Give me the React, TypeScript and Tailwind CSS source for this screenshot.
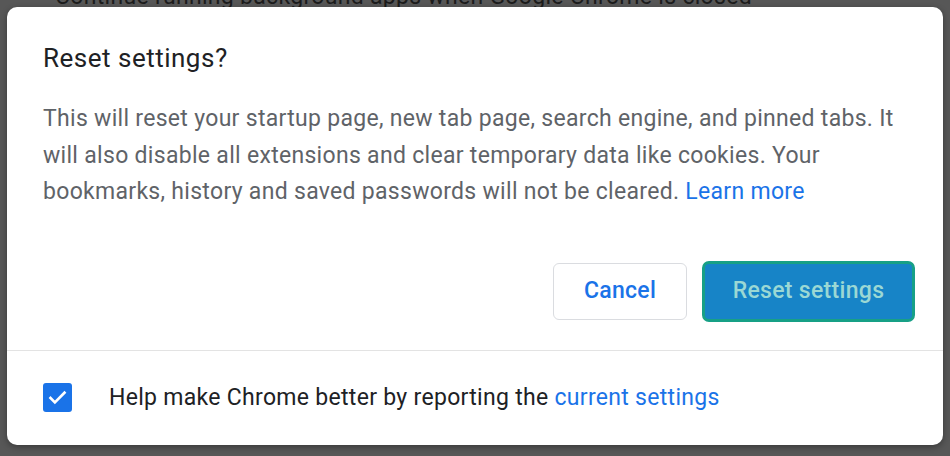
import React from "react";

export default function App() {
  return (
    <div
      className="relative h-[456px] w-[950px] overflow-hidden bg-[#575757] pl-[7px] pt-[7px]"
      style={{ fontFamily: "Roboto, 'Liberation Sans', sans-serif" }}
    >
      <div className="absolute left-[55px] top-[-16px] whitespace-nowrap text-[23px] leading-[26px] tracking-[0.3px] text-[#1c1c1c]">
        Continue running background apps when Google Chrome is closed
      </div>
      <div className="relative flex h-[438px] w-[936px] flex-col rounded-[10px] bg-white shadow-[0_2px_6px_rgba(0,0,0,0.35)]">
        <div className="px-[36px] pt-[35px]">
          <h1 className="text-[26px] leading-[32px] tracking-[0.5px] text-[#202124]">Reset settings?</h1>
          <p className="mt-[27px] w-[866px] text-[23px] leading-[36.5px] tracking-[0.3px] text-[#5f6368]">
            This will reset your startup page, new tab page, search engine, and pinned tabs. It will also
            disable all extensions and clear temporary data like cookies. Your bookmarks, history and saved
            passwords will not be cleared. <span className="text-[#1a73e8]">Learn more</span>
          </p>
        </div>
        <div className="mt-[50px] flex items-center justify-end gap-[15px] pr-[28px]">
          <button className="h-[57px] w-[134px] rounded-[6px] border border-[#dadce0] bg-white text-[23px] font-medium tracking-[0.3px] text-[#1a73e8]">
            Cancel
          </button>
          <button className="h-[61px] w-[213px] rounded-[7px] border-[3px] border-[#17a086] bg-[#1784c7] text-[23px] font-medium tracking-[0.3px] text-[#9bd8d4]">
            Reset settings
          </button>
        </div>
        <div className="mt-[28px] h-px bg-[#e3e3e3]" />
        <div className="flex flex-1 items-center gap-[37px] pl-[36px]">
          <div className="flex h-[29px] w-[29px] items-center justify-center rounded-[3px] bg-[#1a73e8]">
            <svg width="21" height="21" viewBox="0 0 24 24" fill="none">
              <path d="M4 12.5l5 5L20 6.5" stroke="white" strokeWidth="3" strokeLinecap="square" />
            </svg>
          </div>
          <span className="text-[23px] tracking-[0.3px] text-[#202124]">
            Help make Chrome better by reporting the <span className="text-[#1a73e8]">current settings</span>
          </span>
        </div>
      </div>
    </div>
  );
}
